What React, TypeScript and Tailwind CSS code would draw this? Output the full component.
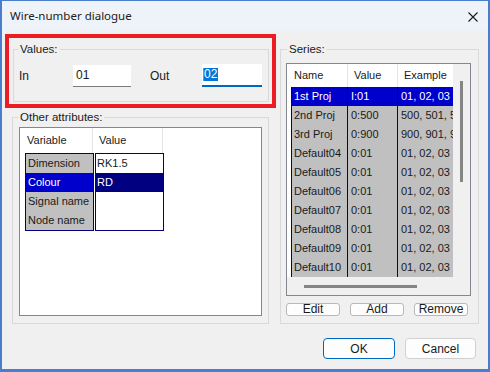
import React from "react";

const attrRows = [
  { name: "Dimension", value: "RK1.5" },
  { name: "Colour", value: "RD", selected: true },
  { name: "Signal name", value: "" },
  { name: "Node name", value: "" },
];

const seriesRows = [
  { name: "1st Proj", value: "I:01", example: "01, 02, 03" },
  { name: "2nd Proj", value: "0:500", example: "500, 501, 502" },
  { name: "3rd Proj", value: "0:900", example: "900, 901, 902" },
  { name: "Default04", value: "0:01", example: "01, 02, 03" },
  { name: "Default05", value: "0:01", example: "01, 02, 03" },
  { name: "Default06", value: "0:01", example: "01, 02, 03" },
  { name: "Default07", value: "0:01", example: "01, 02, 03" },
  { name: "Default08", value: "0:01", example: "01, 02, 03" },
  { name: "Default09", value: "0:01", example: "01, 02, 03" },
  { name: "Default10", value: "0:01", example: "01, 02, 03" },
];

function SmallButton({ label }: { label: string }) {
  return (
    <button className="h-[13px] w-[54px] rounded-[3px] border border-[#b9b9b9] bg-[#fdfdfd] text-[12px] leading-[11px] text-[#1a1a1a]">
      {label}
    </button>
  );
}

export default function App() {
  return (
    <div className="w-[490px] h-[372px] flex flex-col border-x-2 border-t border-b-[3px] border-[#4a7dcb] bg-[#f0f0f0] font-['Liberation_Sans',sans-serif] text-[#1a1a1a] overflow-hidden">
      {/* title bar */}
      <div className="h-[30px] shrink-0 flex items-center justify-between bg-[#eef3fa] pl-[8px] pr-[10px]">
        <span className="text-[11.5px] font-['Noto_Sans',sans-serif] text-[#202020]">Wire-number dialogue</span>
        <svg width="10" height="10" viewBox="0 0 10 10" className="mt-[1px]">
          <path d="M0.5 0.5 L9.5 9.5 M9.5 0.5 L0.5 9.5" stroke="#1a1a1a" strokeWidth="1.1" />
        </svg>
      </div>

      <div className="flex-1 flex flex-col">
        <div className="flex items-start">
          {/* left column */}
          <div className="ml-[3px] mt-[3px] flex flex-col">
            <div className="w-[271px] h-[74px] border-[4px] border-[#ec1c24]">
              <fieldset className="ml-[4px] mt-[4px] w-[256px] border border-[#d9d9d9] pb-[14px]">
                <legend className="ml-[4px] px-[2px] text-[11.5px] leading-[14px]">Values:</legend>
                <div className="mt-[8px] flex items-center text-[12px]">
                  <span className="ml-[5px] w-[54px]">In</span>
                  <div className="w-[58px] h-[22px] bg-white border-b border-[#7a7a7a] flex items-center pl-[3px]">01</div>
                  <span className="ml-[19px] w-[52px]">Out</span>
                  <div className="w-[60px] h-[23px] bg-white border-b-2 border-[#0067c0] flex items-center pl-[1px]">
                    <span className="w-px h-[13px] bg-[#e07a1f]" />
                    <span className="bg-[#0078d7] text-white leading-[13px] pr-[1px]">02</span>
                  </div>
                </div>
              </fieldset>
            </div>

            <fieldset className="ml-[7px] mt-[2px] w-[257px] border border-[#d9d9d9] pb-[7px]">
              <legend className="ml-[5px] px-[2px] text-[11.5px] leading-[14px]">Other attributes:</legend>
              <div className="mx-[6px] mt-[3px] h-[189px] border border-[#828790] bg-white">
                <div className="h-[25px] flex text-[11px]">
                  <div className="w-[73px] pl-[7px] flex items-center border-r border-[#e5e5e5]">Variable</div>
                  <div className="w-[70px] pl-[6px] flex items-center border-r border-[#e5e5e5]">Value</div>
                </div>
                <div className="flex pl-[5px] gap-px text-[11px]">
                  <div className="w-[69px] border border-[#000080]">
                    {attrRows.map((r) => (
                      <div
                        key={r.name}
                        className={`h-[19px] pl-[2px] flex items-center ${r.selected ? "bg-[#0000cc] text-white" : "bg-[#c0c0c0]"}`}
                      >
                        {r.name}
                      </div>
                    ))}
                  </div>
                  <div className="w-[69px] border border-[#000080]">
                    {attrRows.map((r) => (
                      <div
                        key={r.name}
                        className={`h-[19px] pl-[1px] flex items-center ${r.selected ? "bg-[#000080] text-white" : "bg-white"}`}
                      >
                        {r.value}
                      </div>
                    ))}
                  </div>
                </div>
              </div>
            </fieldset>
          </div>

          {/* right column: series */}
          <fieldset className="ml-[4px] mt-[11px] w-[199px] border border-[#d9d9d9] pb-[7px]">
            <legend className="ml-[6px] px-[2px] text-[11.5px] leading-[14px]">Series:</legend>
            <div className="ml-[5px] mt-[7px] w-[185px] h-[233px] border border-[#828790] flex flex-col bg-white">
              <div className="flex flex-1">
                <div className="w-[166px] flex flex-col overflow-hidden">
                  <div className="h-[23px] flex text-[11px] shrink-0">
                    <div className="w-[61px] pl-[7px] flex items-center border-r border-[#e5e5e5] shrink-0">Name</div>
                    <div className="w-[50px] pl-[6px] flex items-center border-r border-[#e5e5e5] shrink-0">Value</div>
                    <div className="pl-[6px] flex items-center whitespace-nowrap">Example</div>
                  </div>
                  <div className="pl-[4px] text-[11px]">
                    {seriesRows.map((r, i) => (
                      <div
                        key={r.name}
                        className={`h-[19px] flex whitespace-nowrap ${i === 0 ? "bg-[#0000cc] text-white" : "bg-[#c0c0c0]"}`}
                      >
                        <div className="w-[56px] shrink-0 border-l border-[#000080] pl-[2px] flex items-center">{r.name}</div>
                        <div className="w-[50px] shrink-0 border-l border-[#000080] pl-[3px] flex items-center">{r.value}</div>
                        <div className="flex-1 border-l border-[#000080] pl-[3px] flex items-center overflow-hidden">{r.example}</div>
                      </div>
                    ))}
                  </div>
                </div>
                <div className="w-[17px] bg-[#f0f0f0] flex justify-center">
                  <div className="mt-[17px] w-[3px] h-[101px] bg-[#858585]" />
                </div>
              </div>
              <div className="h-[18px] bg-[#f0f0f0] shrink-0 flex items-center">
                <div className="ml-[17px] w-[113px] h-[3px] bg-[#858585]" />
              </div>
            </div>
            <div className="ml-[5px] mt-[7px] flex gap-[10px]">
              <SmallButton label="Edit" />
              <SmallButton label="Add" />
              <SmallButton label="Remove" />
            </div>
          </fieldset>
        </div>

        {/* dialog buttons */}
        <div className="mt-[14px] flex justify-end gap-[10px] pr-[12px]">
          <button className="w-[72px] h-[21px] rounded-[4px] border border-[#0067c0] bg-[#fdfdfd] text-[12px]">OK</button>
          <button className="w-[71px] h-[21px] rounded-[4px] border border-[#d0d0d0] bg-[#fdfdfd] text-[12px]">Cancel</button>
        </div>
      </div>
    </div>
  );
}
